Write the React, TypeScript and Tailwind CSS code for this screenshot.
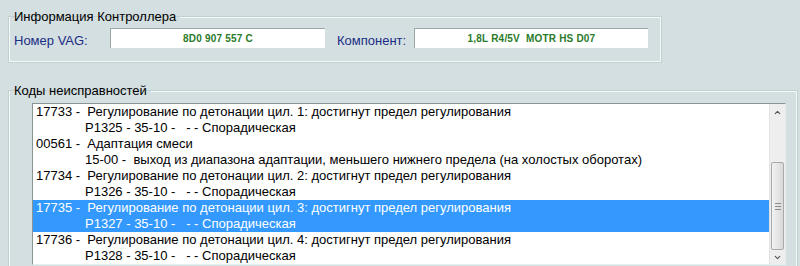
import { ChevronUp, ChevronDown } from 'lucide-react';

const faults = [
  { code: '17733', text: 'Регулирование по детонации цил. 1: достигнут предел регулирования', detail: 'P1325 - 35-10 -   - - Спорадическая' },
  { code: '00561', text: 'Адаптация смеси', detail: '15-00 -  выход из диапазона адаптации, меньшего нижнего предела (на холостых оборотах)' },
  { code: '17734', text: 'Регулирование по детонации цил. 2: достигнут предел регулирования', detail: 'P1326 - 35-10 -   - - Спорадическая' },
  { code: '17735', text: 'Регулирование по детонации цил. 3: достигнут предел регулирования', detail: 'P1327 - 35-10 -   - - Спорадическая', selected: true },
  { code: '17736', text: 'Регулирование по детонации цил. 4: достигнут предел регулирования', detail: 'P1328 - 35-10 -   - - Спорадическая' },
];

function Field({ label, value, labelWidth, boxWidth }: { label: string; value: string; labelWidth: string; boxWidth: string }) {
  return (
    <div className="flex items-start">
      <span className={`${labelWidth} pt-[5px] text-[13px] leading-4 text-[#1b2d86]`}>{label}</span>
      <div className={`${boxWidth} h-5 bg-white border-t border-l border-[#9aa6a6] flex items-center justify-center text-[10px] font-bold text-[#2a7a2a] tracking-[0.2px] whitespace-pre`}>
        {value}
      </div>
    </div>
  );
}

export default function App() {
  return (
    <div className="w-[800px] h-[266px] overflow-hidden bg-[#d3dfe0] font-['Liberation_Sans',Arial,sans-serif] text-black">
      <fieldset className="ml-[9px] mt-[9px] w-[652px] h-[53px] border border-[#f3f8f8] shadow-[0_0_0_1px_#c4d0d0]">
        <legend className="px-1 text-[13px] leading-4">Информация Контроллера</legend>
        <div className="flex items-start pl-1 mt-[3px]">
          <Field label="Номер VAG:" value="8D0 907 557 C" labelWidth="w-[96px]" boxWidth="w-[215px]" />
          <div className="w-[12px]" />
          <Field label="Компонент:" value="1,8L R4/5V  MOTR HS D07" labelWidth="w-[77px]" boxWidth="w-[234px]" />
        </div>
      </fieldset>

      <fieldset className="ml-[9px] mt-[21px] w-[788px] h-[200px] border border-[#f3f8f8] shadow-[0_0_0_1px_#c4d0d0]">
        <legend className="px-1 text-[13px] leading-4">Коды неисправностей</legend>
        <div className="ml-[22px] mt-[4px] w-[754px] h-[162px] flex bg-white border-t border-l border-[#8a9494] border-r border-r-[#e8eeee] border-b border-b-[#e8eeee]">
          <div className="flex-1 text-[13px] leading-4 whitespace-pre">
            {faults.map((f) => (
              <div key={f.code} className={f.selected ? 'bg-[#3399ff] text-white' : ''}>
                <div className="pl-[3px]">{`${f.code} -  ${f.text}`}</div>
                <div className="pl-[52px]">{f.detail}</div>
              </div>
            ))}
          </div>
          <div className="w-[16px] flex flex-col bg-[#eeeeee] border-l border-[#e2e2e2]">
            <div className="h-[16px] flex items-center justify-center text-[#555]">
              <ChevronUp size={9} strokeWidth={3} />
            </div>
            <div className="h-[42px]" />
            <div className="mx-[1px] h-[88px] rounded-[2px] border border-[#a9a9a9] bg-gradient-to-r from-[#f2f2f2] to-[#d9d9d9] flex flex-col items-center justify-center gap-[2px]">
              <div className="w-[6px] h-px bg-[#8a8a8a]" />
              <div className="w-[6px] h-px bg-[#8a8a8a]" />
              <div className="w-[6px] h-px bg-[#8a8a8a]" />
            </div>
            <div className="flex-1 flex items-center justify-center text-[#555]">
              <ChevronDown size={9} strokeWidth={3} />
            </div>
          </div>
        </div>
      </fieldset>
    </div>
  );
}
